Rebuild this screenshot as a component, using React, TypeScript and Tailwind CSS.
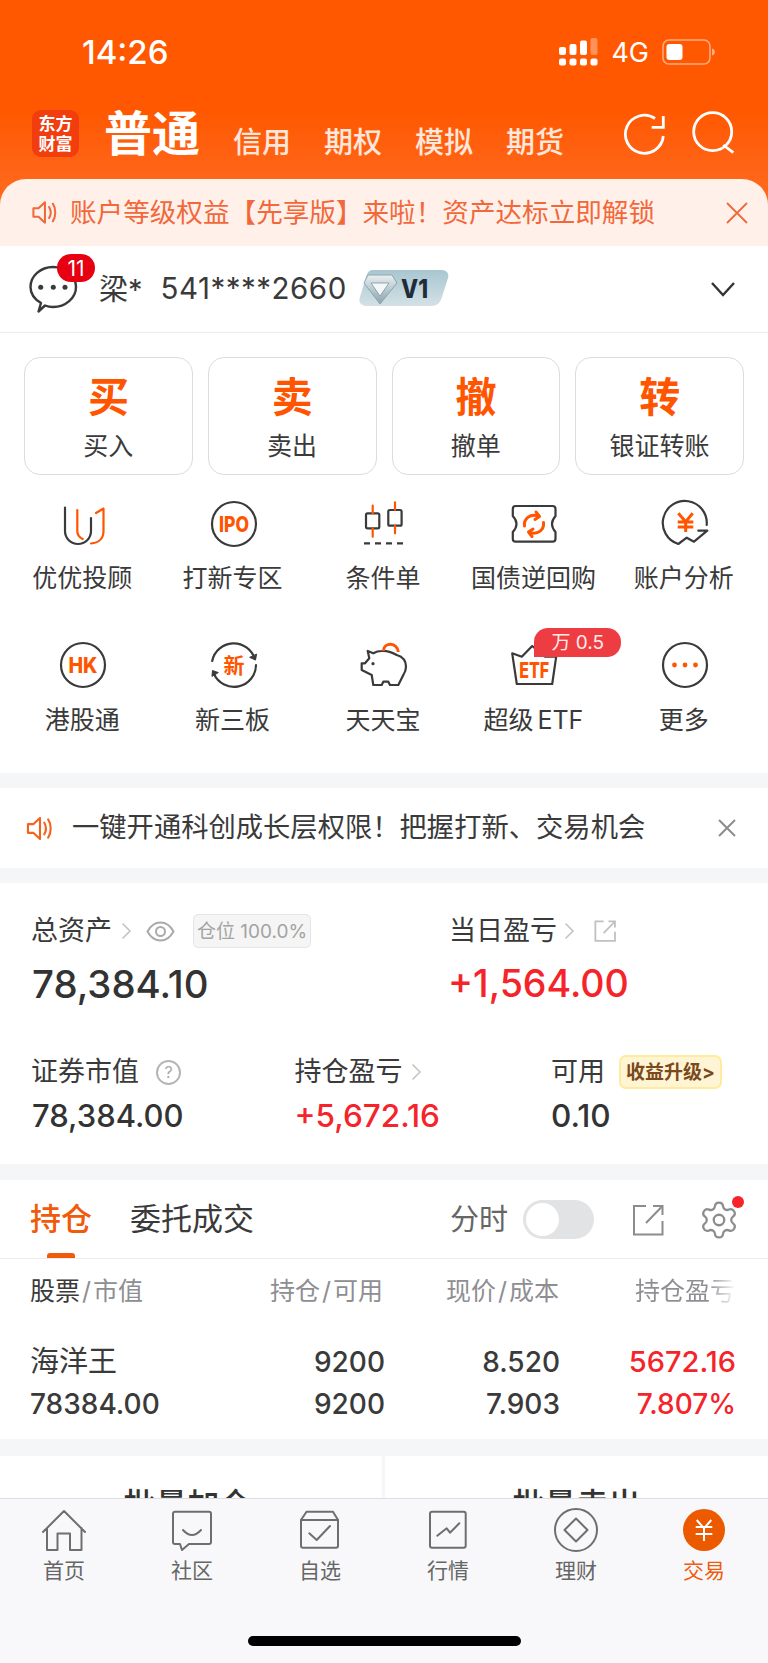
import React from 'react';
import { Settings } from 'lucide-react';

const OR = '#ff5500';
const DK = '#3a3a3a';

function Speaker({ c, w, h, sw = 2 }: { c: string; w: number; h: number; sw?: number }) {
  return (
    <svg width={w} height={h} viewBox="0 0 27 26" fill="none" stroke={c} strokeWidth={sw} strokeLinejoin="round" strokeLinecap="round">
      <path d="M1.5 8.5H7L14 2V24L7 17.5H1.5Z" />
      <path d="M18.5 7C20.5 10.5 20.5 15.5 18.5 19" />
      <path d="M22.5 3.5C26 8.5 26 17.5 22.5 22.5" />
    </svg>
  );
}
function Chev({ c = '#c4c4c4', h = 18 }: { c?: string; h?: number }) {
  return (
    <svg width={h / 2 + 2} height={h} viewBox="0 0 11 18" fill="none" stroke={c} strokeWidth="1.6">
      <path d="M1.5 1.5L9 9L1.5 16.5" />
    </svg>
  );
}
function OpenIcon({ s, c, sw }: { s: number; c: string; sw: number }) {
  return (
    <svg width={s} height={s} viewBox="0 0 32 32" fill="none" stroke={c} strokeWidth={sw}>
      <path d="M14 2H2V30.5H30.5V17" />
      <path d="M14 19L29.5 3" />
      <path d="M21 2H30.5V11" />
    </svg>
  );
}

function IconBox({ children }: { children: React.ReactNode }) {
  return (
    <svg width="50" height="50" viewBox="0 0 50 50" fill="none" stroke={DK} strokeWidth="2.2" strokeLinecap="round" strokeLinejoin="round">
      {children}
    </svg>
  );
}
const FONT = "Inter, 'Noto Sans CJK SC', sans-serif";
const icons: Record<string, React.ReactNode> = {
  u: (
    <IconBox>
      <path d="M7 9.5V33A13 13 0 0 0 33 33V20" />
      <path d="M19.3 12V33C19.3 37 21.5 39.5 24.7 41" stroke={OR} />
      <path d="M33 45.5C40 45 45.5 41 45.5 33V10.5L38 15" stroke={OR} />
    </IconBox>
  ),
  ipo: (
    <IconBox>
      <circle cx="25" cy="26" r="22" />
      <text x="25" y="33.5" textAnchor="middle" fontSize="21" fontWeight="800" fill={OR} stroke="none" fontFamily={FONT} textLength="30" lengthAdjust="spacingAndGlyphs">IPO</text>
    </IconBox>
  ),
  candle: (
    <IconBox>
      <rect x="7" y="15.3" width="13.3" height="15" rx="1.5" />
      <rect x="29.3" y="12" width="13.3" height="15.7" rx="1.5" />
      <path d="M13.7 7.7V15.3M13.7 30.3V38.7M36 4.3V12M36 27.7V35.3" stroke={OR} />
      <path d="M5 45.3H44.3" strokeDasharray="6 5" strokeLinecap="butt" />
    </IconBox>
  ),
  ticket: (
    <IconBox>
      <path d="M6.5 8H43.5Q46.5 8 46.5 11V18Q43 22 43 26Q43 30 46.5 34V40.7Q46.5 43.7 43.5 43.7H6.5Q3.8 43.7 3.8 40.7V34Q7.5 30 7.5 26Q7.5 22 3.8 18V11Q3.8 8 6.5 8Z" />
      <g stroke={OR} strokeWidth="3">
        <path d="M15.5 28C14.5 21 21 15.5 29 18" />
        <path d="M27 14L30.5 18.5L26 21.5" />
        <path d="M34.5 24.5C35.5 31.5 29 37 21 34.5" />
        <path d="M23 38.5L19.5 34L24 31" />
      </g>
    </IconBox>
  ),
  yen: (
    <IconBox>
      <path d="M46.7 27A22 22 0 1 0 18.3 46L26.7 39.7L34 43.7L47.3 32.7H38.3" />
      <path d="M18.3 15.3L25.7 23.7L32.7 15.3M17.7 24H33.3M17.7 29H33.3M25.7 23.7V34" stroke={OR} strokeWidth="3" strokeLinecap="butt" strokeLinejoin="miter" />
    </IconBox>
  ),
  hk: (
    <IconBox>
      <circle cx="25" cy="25" r="22" />
      <text x="25" y="32.5" textAnchor="middle" fontSize="21" fontWeight="800" fill={OR} stroke="none" fontFamily={FONT} textLength="29" lengthAdjust="spacingAndGlyphs">HK</text>
    </IconBox>
  ),
  xin: (
    <IconBox>
      <path d="M3.2 21A22 22 0 0 1 45.8 19" />
      <path d="M47 25A22 22 0 0 1 5 34" />
      <path d="M41 17.5L46.5 20L47.5 14.5Z" fill={DK} strokeWidth="1" />
      <path d="M9 32.5L3.5 30.5L3 36Z" fill={DK} strokeWidth="1" />
      <text x="25" y="33" textAnchor="middle" fontSize="21" fontWeight="700" fill={OR} stroke="none" fontFamily={FONT}>新</text>
    </IconBox>
  ),
  pig: (
    <IconBox>
      <path d="M2.7 23.3V30L12.7 35L14.3 45H22.7L24.3 41.7H29.3L31 45H39.3L44.3 35C46.5 31.5 47 29 47 26.7C47 20.5 43 16.5 37.7 15C32 12 27 10.5 22.7 11C19 11 16.5 12 14.3 13.3L8.7 11L10.3 18.3L6 23.3Z" />
      <circle cx="14" cy="23.7" r="1.6" fill={DK} stroke="none" />
      <path d="M24.3 11C24.5 6.5 28 4.3 31.7 4.3C35.5 4.3 39 7.5 39.3 12" stroke={OR} strokeWidth="3" strokeLinecap="butt" />
    </IconBox>
  ),
  etf: (
    <IconBox>
      <path d="M3.2 13.3L12.8 16.7L23.2 6L36 16.7H47.2L43.2 44H7.8Z" />
      <text x="25.2" y="38" textAnchor="middle" fontSize="21" fontWeight="800" fill={OR} stroke="none" fontFamily={FONT} textLength="30" lengthAdjust="spacingAndGlyphs">ETF</text>
    </IconBox>
  ),
  more: (
    <IconBox>
      <circle cx="25" cy="25" r="22" />
      <g fill={OR} stroke="none">
        <circle cx="14.5" cy="25" r="2.4" />
        <circle cx="25" cy="25" r="2.4" />
        <circle cx="35.5" cy="25" r="2.4" />
      </g>
    </IconBox>
  ),
};

const menu = [
  { k: 'u', t: '优优投顾' },
  { k: 'ipo', t: '打新专区' },
  { k: 'candle', t: '条件单' },
  { k: 'ticket', t: '国债逆回购' },
  { k: 'yen', t: '账户分析' },
  { k: 'hk', t: '港股通' },
  { k: 'xin', t: '新三板' },
  { k: 'pig', t: '天天宝' },
  { k: 'etf', t: '超级 ETF' },
  { k: 'more', t: '更多' },
];

function TabIcon({ children }: { children: React.ReactNode }) {
  return (
    <svg width="46" height="46" viewBox="0 0 46 46" fill="none" stroke="#6e6e6e" strokeWidth="2" strokeLinejoin="round" strokeLinecap="round">
      {children}
    </svg>
  );
}
const tabs = [
  {
    t: '首页',
    i: (
      <TabIcon>
        <path d="M2 25L23 4L44 25M6 21V43H16.5V26.5H29V43H40.5V21" />
      </TabIcon>
    ),
  },
  {
    t: '社区',
    i: (
      <TabIcon>
        <path d="M6 4.7H40A2 2 0 0 1 42 6.7V35A2 2 0 0 1 40 37H20L13 43L11 37H6A2 2 0 0 1 4 35V6.7A2 2 0 0 1 6 4.7Z" />
        <path d="M14 23Q23 33 32 23" />
      </TabIcon>
    ),
  },
  {
    t: '自选',
    i: (
      <TabIcon>
        <path d="M4 13H41V38.7A2 2 0 0 1 39 40.7H6A2 2 0 0 1 4 38.7Z" />
        <path d="M4 13L9.5 4.7H36L41 13" />
        <path d="M12.3 26.3L19.7 33L33 19" />
      </TabIcon>
    ),
  },
  {
    t: '行情',
    i: (
      <TabIcon>
        <rect x="5" y="4.7" width="35.7" height="36" rx="2" />
        <path d="M12.3 28.7L21.7 21.3L25 25.7L34.3 16.3" />
      </TabIcon>
    ),
  },
  {
    t: '理财',
    i: (
      <TabIcon>
        <circle cx="23" cy="23" r="21" />
        <path d="M23 11.5L34.5 23L23 34.5L11.5 23Z" />
      </TabIcon>
    ),
  },
  {
    t: '交易',
    on: true,
    i: (
      <svg width="46" height="46" viewBox="0 0 46 46" fill="none">
        <circle cx="23" cy="23" r="21" fill="#ec5a00" />
        <path d="M15.7 13L23 21.3L30.3 13M14.7 20H31.3M14.7 27H31.3M23 21V34" stroke="#fff" strokeWidth="2" />
      </svg>
    ),
  },
];

function Cell({ children, right }: { children: React.ReactNode; right?: boolean }) {
  return <div className={right ? 'text-right' : ''}>{children}</div>;
}

export default function App() {
  return (
    <div className="flex h-[1663px] w-[768px] flex-col overflow-hidden bg-white font-[Inter,'Noto_Sans_CJK_SC',sans-serif] text-[#333333]">
      <div className="flex-1 overflow-hidden">
        {/* Header */}
        <div className="bg-linear-to-b from-[#ff5800] from-[45%] to-[#ff7326]">
          <div className="flex h-[104px] items-center pl-[82px] pr-[52px] text-white">
            <span className="text-[33px] font-medium leading-none">14:26</span>
            <div className="ml-auto flex items-center">
              <svg width="40" height="28" viewBox="0 0 40 28" fill="#fff">
                <rect x="1" y="20.5" width="7" height="7" rx="2" />
                <rect x="11.5" y="20.5" width="7" height="7" rx="2" />
                <rect x="22" y="20.5" width="7" height="7" rx="2" />
                <rect x="32.5" y="20.5" width="7" height="7" rx="2" />
                <rect x="1" y="9" width="7" height="8" rx="2" />
                <rect x="11.5" y="6" width="7" height="11" rx="2" />
                <rect x="22" y="2.5" width="7" height="14.5" rx="2" />
                <rect x="32.5" y="0" width="7" height="17" rx="2" fillOpacity="0.35" />
              </svg>
              <span className="ml-[13px] text-[27px] font-normal leading-none">4G</span>
              <svg className="ml-[13px]" width="54" height="26" viewBox="0 0 54 26" fill="none">
                <rect x="1" y="1" width="47" height="24" rx="6" stroke="#fff" strokeOpacity="0.5" strokeWidth="1.6" />
                <rect x="4.5" y="5" width="16" height="16" rx="3" fill="#fff" />
                <path d="M50 9.5C52 10 53 11.5 53 13C53 14.5 52 16 50 16.5Z" fill="#fff" fillOpacity="0.5" />
              </svg>
            </div>
          </div>
          <div className="flex h-[75px] items-start pl-[32px] pt-[6px]">
            <div className="flex h-[47px] w-[47px] flex-col items-center justify-center rounded-[9px] bg-[#f23d0e] text-[17px] font-bold leading-[20px] text-white">
              <span>东方</span>
              <span>财富</span>
            </div>
            <span className="ml-[25px] text-[48px] font-bold leading-[47px] text-white">普通</span>
            <div className="ml-[33px] mt-[13px] flex gap-[33px] text-[29px] font-medium leading-[40px] text-white/85">
              <span>信用</span>
              <span>期权</span>
              <span>模拟</span>
              <span>期货</span>
            </div>
            <svg className="ml-[57px] mt-[1px]" width="46" height="46" viewBox="0 0 46 46" fill="none" stroke="#fff" strokeWidth="2.8">
              <path d="M42.3 25A19 19 0 1 1 34 7.5" />
              <path d="M30.7 16.3H42.3V5" />
            </svg>
            <svg className="ml-[23px] mt-[1px]" width="46" height="46" viewBox="0 0 46 46" fill="none" stroke="#fff" strokeWidth="2.8">
              <circle cx="22.7" cy="20.7" r="19" />
              <path d="M33.3 34L43.3 41.7" />
            </svg>
          </div>
          <div className="flex h-[67px] items-center rounded-t-[26px] bg-[#fff1ea] pl-[32px] text-[#f2683a]">
            <Speaker c="#f2683a" w={25} h={27} sw={2.2} />
            <span className="ml-[13px] whitespace-nowrap text-[26.6px] leading-none">账户等级权益【先享版】来啦！资产达标立即解锁</span>
            <svg className="ml-[70px]" width="24" height="24" viewBox="0 0 24 24" stroke="#f2683a" strokeWidth="1.8">
              <path d="M2 2L22 22M22 2L2 22" />
            </svg>
          </div>
        </div>

        {/* Account */}
        <div className="flex h-[87px] items-center border-b border-[#ececec] pl-[28px] pr-[32px]">
          <div className="relative h-[50px] w-[50px]">
            <svg width="50" height="50" viewBox="0 0 50 50" fill="none" stroke={DK} strokeWidth="2.4" strokeLinejoin="round">
              <path d="M13 39C6 35 2.5 29 2.5 23C2.5 12 12.5 3 25 3C37.5 3 48 12 48 23C48 34 37.5 43 25 43C22 43 19.5 42.5 17 41.5L10.5 47.5Z" />
              <g fill={DK} stroke="none">
                <circle cx="12.7" cy="23.3" r="2.5" />
                <circle cx="25.3" cy="23.3" r="2.5" />
                <circle cx="37" cy="23.3" r="2.5" />
              </g>
            </svg>
            <span className="absolute left-[29px] top-[-10px] flex h-[28px] w-[38px] items-center justify-center rounded-full bg-[#e60012] text-[21px] leading-none text-white">11</span>
          </div>
          <span className="ml-[21px] text-[29px] leading-none text-[#3a3a3a]">梁*</span>
          <span className="ml-[18px] text-[29.5px] leading-none tracking-[0.5px] text-[#3a3a3a]">541****2660</span>
          <svg className="ml-[12px] mt-[-2px]" width="90" height="36" viewBox="0 0 90 36" fill="none">
            <defs>
              <linearGradient id="vb" x1="0" y1="0" x2="0" y2="1">
                <stop offset="0" stopColor="#a8c6d0" />
                <stop offset="1" stopColor="#d3e1e6" />
              </linearGradient>
              <linearGradient id="gem" x1="0" y1="0" x2="0" y2="1">
                <stop offset="0" stopColor="#e9eff1" />
                <stop offset="1" stopColor="#8aa2ac" />
              </linearGradient>
            </defs>
            <path d="M14 0H82C87 0 90.5 3 89 8L83 27C81 33 78 36 72 36H8C2 36 -1 32 1 27L7 7C8.5 2.5 10 0 14 0Z" fill="url(#vb)" />
            <path d="M9 5H33L38 13L21 34L5 13Z" fill="url(#gem)" stroke="#8ea5ae" strokeWidth="1" />
            <path d="M12 13H30L21 26Z" fill="#f4f7f8" stroke="#8ea5ae" strokeWidth="1" />
            <text x="42" y="28" fontSize="26" fontWeight="800" fill="#1f2d3a" fontFamily={FONT} textLength="27" lengthAdjust="spacingAndGlyphs">V1</text>
          </svg>
          <svg className="ml-auto" width="26" height="16" viewBox="0 0 26 16" fill="none" stroke="#333" strokeWidth="2.4">
            <path d="M2 2L13 14L24 2" />
          </svg>
        </div>

        {/* Actions */}
        <div className="grid grid-cols-4 gap-[15px] px-[24px] pt-[24px]">
          {[
            ['买', '买入'],
            ['卖', '卖出'],
            ['撤', '撤单'],
            ['转', '银证转账'],
          ].map(([a, b]) => (
            <div key={a} className="flex h-[118px] flex-col items-center rounded-[16px] border border-[#dcdcdc] pt-[14px]">
              <span className="text-[41px] font-bold leading-[50px] text-[#ff5500]">{a}</span>
              <span className="mt-[9px] text-[25px] leading-[30px] text-[#3a3a3a]">{b}</span>
            </div>
          ))}
        </div>

        {/* Menu */}
        <div className="-mt-[1px] grid grid-cols-5 px-[8px] pb-[15px]">
          {menu.map((m) => (
            <div key={m.k} className="relative flex h-[142px] flex-col items-center pt-[24px]">
              {icons[m.k]}
              <span className="-ml-[2px] mt-[15px] whitespace-nowrap text-[25px] leading-[30px] text-[#3a3a3a] [word-spacing:-3px]">{m.t}</span>
              {m.k === 'etf' && (
                <span className="absolute left-[75px] top-[12px] flex h-[29px] w-[87px] items-center justify-center rounded-[14px] rounded-bl-none bg-[#ee3d42] text-[19px] leading-none text-white/90">万 0.5</span>
              )}
            </div>
          ))}
        </div>

        {/* Notice */}
        <div className="border-y-[15px] border-[#f5f6f8]">
          <div className="flex h-[80px] items-center pl-[26px]">
            <Speaker c="#f2641e" w={27} h={25} sw={2.2} />
            <span className="ml-[19px] whitespace-nowrap text-[27.3px] leading-none text-[#3a3a3a]">一键开通科创成长层权限！把握打新、交易机会</span>
            <svg className="ml-[73px]" width="18" height="18" viewBox="0 0 18 18" stroke="#8c8c8c" strokeWidth="2">
              <path d="M1 1L17 17M17 1L1 17" />
            </svg>
          </div>
        </div>

        {/* Assets */}
        <div className="h-[281px] pl-[32px] pt-[31px]">
          <div className="flex">
            <div className="w-[417px]">
              <div className="-ml-[1px] flex h-[34px] items-center text-[27px] text-[#3a3a3a]">
                <span>总资产</span>
                <span className="ml-[9px]"><Chev /></span>
                <svg className="ml-[14px]" width="29" height="21" viewBox="0 0 29 21" fill="none" stroke="#aaaaaa" strokeWidth="2">
                  <path d="M1.5 10.5C5 4 9.5 1.5 14.5 1.5C19.5 1.5 24 4 27.5 10.5C24 17 19.5 19.5 14.5 19.5C9.5 19.5 5 17 1.5 10.5Z" />
                  <circle cx="14.5" cy="10.5" r="4.5" />
                </svg>
                <span className="ml-[18px] flex h-[34px] w-[118px] items-center justify-center whitespace-nowrap rounded-[5px] border border-[#e5e5e5] bg-[#f5f5f5] text-[19px] leading-none text-[#a3a3a3]">仓位 100.0%</span>
              </div>
              <div className="mt-[13px] text-[38.4px] font-medium leading-[46px] text-[#333]">78,384.10</div>
            </div>
            <div>
              <div className="flex h-[34px] items-center text-[27px] text-[#3a3a3a]">
                <span>当日盈亏</span>
                <span className="ml-[7px]"><Chev /></span>
                <span className="ml-[19px]"><OpenIcon s={22} c="#c0c0c0" sw={2.6} /></span>
              </div>
              <div className="-ml-[1px] mt-[13px] text-[37.6px] font-medium leading-[46px] text-[#f5242a]">+1,564.00</div>
            </div>
          </div>
          <div className="mt-[48px] flex">
            <div className="w-[262.5px]">
              <div className="-ml-[1px] flex h-[34px] items-center text-[27px] text-[#3a3a3a]">
                <span>证券市值</span>
                <span className="ml-[17px] flex h-[25px] w-[25px] items-center justify-center rounded-full border-2 border-[#b5b5b5] text-[16px] leading-none text-[#a8a8a8]">?</span>
              </div>
              <div className="mt-[8px] text-[31px] font-medium leading-[38px] text-[#333]">78,384.00</div>
            </div>
            <div className="w-[256.5px]">
              <div className="flex h-[34px] items-center text-[27px] text-[#3a3a3a]">
                <span>持仓盈亏</span>
                <span className="ml-[8px]"><Chev /></span>
              </div>
              <div className="mt-[8px] text-[31.5px] font-medium leading-[38px] text-[#f5242a]">+5,672.16</div>
            </div>
            <div>
              <div className="flex h-[34px] items-center text-[27px] text-[#3a3a3a]">
                <span>可用</span>
                <span className="ml-[14px] flex h-[34px] w-[103px] items-center justify-center whitespace-nowrap rounded-[7px] border-2 border-[#ffeb9c] bg-[#fff4d4] text-[19px] font-bold leading-none text-[#7a4a1c]">收益升级&gt;</span>
              </div>
              <div className="mt-[8px] text-[31.5px] font-medium leading-[38px] text-[#333]">0.10</div>
            </div>
          </div>
        </div>

        {/* Holdings */}
        <div className="border-t-[16px] border-[#f5f6f8]">
          <div className="flex h-[79px] items-start border-b border-[#ececec] pl-[30px]">
            <div className="relative mt-[19px] h-[59px] text-[31px] font-medium leading-[40px] text-[#f05a0a]">
              持仓
              <span className="absolute left-[17px] top-[54px] h-[5px] w-[28px] rounded-t-[3px] bg-[#f05a0a]" />
            </div>
            <span className="ml-[38px] mt-[19px] text-[31px] leading-[40px] text-[#3a3a3a]">委托成交</span>
            <span className="ml-[196px] mt-[21px] text-[29px] leading-[38px] text-[#666]">分时</span>
            <div className="ml-[15px] mt-[20px] flex h-[39px] w-[71px] items-center rounded-full bg-[#e2e3e5] pl-[3px]">
              <span className="h-[33px] w-[33px] rounded-full bg-white" />
            </div>
            <span className="ml-[38px] mt-[24px]"><OpenIcon s={32} c="#8c8c8c" sw={2} /></span>
            <div className="relative ml-[34px] mt-[19px]">
              <Settings size={42} color="#8c8c8c" strokeWidth={1.3} />
              <span className="absolute left-[34px] top-[-3px] h-[12px] w-[12px] rounded-full bg-[#f5242a]" />
            </div>
          </div>
          <div className="grid h-[64px] grid-cols-[193px_160px_176px_177px] items-center pl-[30px] text-[25px] leading-none text-[#8e8e93]">
            <div><span className="text-[#3a3a3a]">股票</span><span className="mx-[2px]">/</span>市值</div>
            <div className="text-right">持仓<span className="mx-[2px]">/</span>可用</div>
            <div className="text-right">现价<span className="mx-[2px]">/</span>成本</div>
            <Cell right>
              <span className="bg-linear-to-r from-[#8e8e93] from-[72%] to-white bg-clip-text pr-[1px] text-transparent">持仓盈亏</span>
            </Cell>
          </div>
          <div className="grid grid-cols-[193px_162px_175px_176px] pb-[14px] pl-[30px] pt-[18px] text-[28px] font-medium leading-[42px] text-[#3a3a3a]">
            <div className="text-[29px] font-normal">海洋王</div>
            <Cell right>9200</Cell>
            <Cell right>8.520</Cell>
            <div className="text-right text-[29px] text-[#f5242a]">5672.16</div>
            <div>78384.00</div>
            <Cell right>9200</Cell>
            <Cell right>7.903</Cell>
            <div className="text-right text-[#f5242a]">7.807%</div>
          </div>
        </div>
        <div className="flex border-t-[17px] border-[#f5f6f8] text-[32px] font-medium leading-[40px] text-[#333]">
          <div className="w-[382px] pr-[7px] pt-[29px] text-center">批量加仓</div>
          <div className="w-[3px] bg-[#f5f6f8]" />
          <div className="flex-1 pt-[29px] text-center">批量卖出</div>
        </div>
      </div>

      {/* Tab bar */}
      <div className="h-[165px] shrink-0 border-t border-[#dddde2] bg-[#f8f8fa] pt-[8px]">
        <div className="grid grid-cols-6">
          {tabs.map((t) => (
            <div key={t.t} className="flex flex-col items-center">
              {t.i}
              <span className={`mt-[4px] text-[21px] leading-[28px] ${t.on ? 'text-[#f05a0a]' : 'text-[#666]'}`}>{t.t}</span>
            </div>
          ))}
        </div>
        <div className="mx-auto mt-[51px] h-[10px] w-[273px] rounded-full bg-black" />
      </div>
    </div>
  );
}
